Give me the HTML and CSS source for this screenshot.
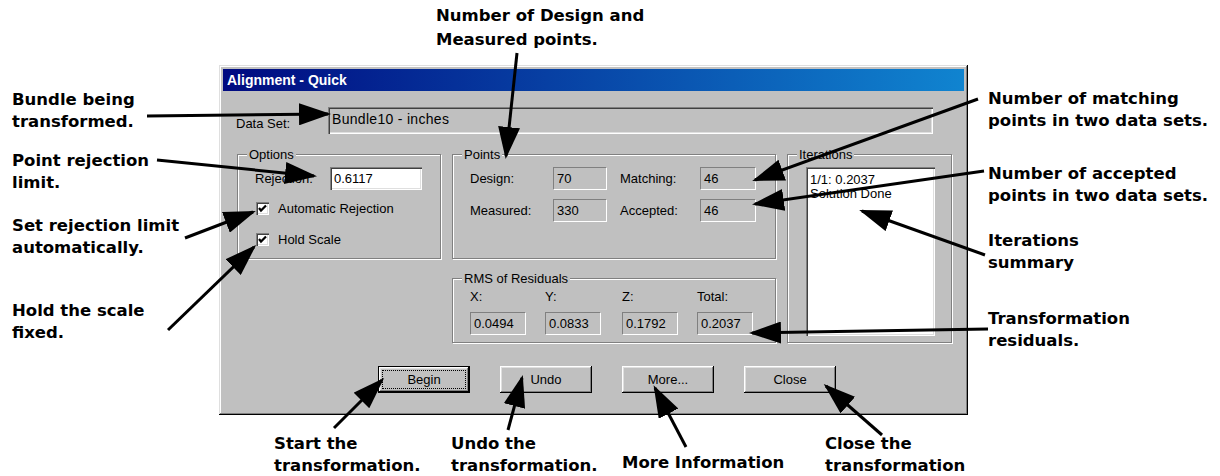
FILE: index.html
```html
<!DOCTYPE html>
<html>
<head>
<meta charset="utf-8">
<title>Alignment - Quick</title>
<link rel="stylesheet" href="styles.css">
</head>
<body>
<div class="canvas">
  <div class="dialog">
    <div class="titlebar">Alignment - Quick</div>
    <div class="dlg-body">
      <div class="dataset">
        <span class="ds-label">Data Set:</span>
        <div class="ds-field">Bundle10 - inches</div>
      </div>
      <div class="groups">
        <fieldset class="grp g-options">
          <legend>Options</legend>
          <div class="opt-row"><span class="opt-label">Rejection:</span><div class="edit">0.6117</div></div>
          <div class="check c1"><span class="cb"><svg width="13" height="13" viewBox="0 0 13 13"><path d="M3 6 L5 8.5 L10 3.5" fill="none" stroke="#000" stroke-width="2.2"/></svg></span>Automatic Rejection</div>
          <div class="check c2"><span class="cb"><svg width="13" height="13" viewBox="0 0 13 13"><path d="M3 6 L5 8.5 L10 3.5" fill="none" stroke="#000" stroke-width="2.2"/></svg></span>Hold Scale</div>
        </fieldset>
        <fieldset class="grp g-points">
          <legend>Points</legend>
          <div class="pts-grid">
            <span class="lbl">Design:</span><div class="static s-design">70</div><span></span><span class="lbl">Matching:</span><div class="static s-match">46</div>
            <span class="lbl">Measured:</span><div class="static s-design">330</div><span></span><span class="lbl">Accepted:</span><div class="static s-match">46</div>
          </div>
        </fieldset>
        <fieldset class="grp g-iter">
          <legend>Iterations</legend>
          <div class="listbox">
            <div>1/1: 0.2037</div>
            <div>Solution Done</div>
          </div>
        </fieldset>
        <fieldset class="grp g-rms">
          <legend>RMS of Residuals</legend>
          <div class="rms-grid">
            <span class="lbl">X:</span><span class="lbl">Y:</span><span class="lbl">Z:</span><span class="lbl">Total:</span>
            <div class="static s-rms">0.0494</div><div class="static s-rms">0.0833</div><div class="static s-rms">0.1792</div><div class="static s-rms">0.2037</div>
          </div>
        </fieldset>
      </div>
      <div class="buttons">
        <div class="btn btn-default"><span class="focus">Begin</span></div>
        <div class="btn"><span class="plain">Undo</span></div>
        <div class="btn"><span class="plain">More...</span></div>
        <div class="btn"><span class="plain">Close</span></div>
      </div>
    </div>
  </div>

  <div class="note n-design">Number of Design and<br>Measured points.</div>
  <div class="note n-bundle">Bundle being<br>transformed.</div>
  <div class="note n-reject">Point rejection<br>limit.</div>
  <div class="note n-auto">Set rejection limit<br>automatically.</div>
  <div class="note n-hold">Hold the scale<br>fixed.</div>
  <div class="note n-match">Number of matching<br>points in two data sets.</div>
  <div class="note n-accept">Number of accepted<br>points in two data sets.</div>
  <div class="note n-iter">Iterations<br>summary</div>
  <div class="note n-resid">Transformation<br>residuals.</div>
  <div class="note n-start">Start the<br>transformation.</div>
  <div class="note n-undo">Undo the<br>transformation.</div>
  <div class="note n-more">More Information</div>
  <div class="note n-close">Close the<br>transformation</div>

  <svg class="arrows" width="1220" height="476" viewBox="0 0 1220 476">
    <defs>
      <marker id="ah" markerUnits="userSpaceOnUse" markerWidth="32" markerHeight="22" refX="29" refY="11" orient="auto">
        <path d="M0,0 L32,11 L0,22 Z" fill="#000"/>
      </marker>
    </defs>
    <g stroke="#000" stroke-width="3" marker-end="url(#ah)">
      <line x1="517" y1="53" x2="506" y2="156"/>
      <line x1="147" y1="116" x2="328" y2="114"/>
      <line x1="157" y1="160" x2="314" y2="176"/>
      <line x1="185" y1="238" x2="253" y2="212"/>
      <line x1="168" y1="330" x2="254" y2="247"/>
      <line x1="978" y1="99" x2="755" y2="180"/>
      <line x1="984" y1="171" x2="755" y2="204"/>
      <line x1="985" y1="255" x2="862" y2="211"/>
      <line x1="988" y1="329" x2="752" y2="333"/>
      <line x1="334" y1="428" x2="382" y2="380"/>
      <line x1="508" y1="430" x2="522" y2="378"/>
      <line x1="686" y1="447" x2="655" y2="388"/>
      <line x1="882" y1="435" x2="826" y2="386"/>
    </g>
  </svg>
</div>
</body>
</html>
```
FILE: styles.css
```css
html, body {
  margin: 0;
  padding: 0;
  background: #fff;
}

.canvas {
  position: relative;
  width: 1220px;
  height: 476px;
  overflow: hidden;
  background: #fff;
}

/* ---------- dialog ---------- */
.dialog {
  position: absolute;
  left: 219px;
  top: 65px;
  width: 749px;
  height: 350px;
  box-sizing: border-box;
  padding: 4px;
  background: #c0c0c0;
  box-shadow: inset -1px -1px #000, inset 1px 1px #dfdfdf, inset -2px -2px #808080, inset 2px 2px #fff;
  display: flex;
  flex-direction: column;
  font: 13px/15px "Liberation Sans", Arial, sans-serif;
  color: #000;
}

.titlebar {
  height: 22px;
  line-height: 22px;
  padding-left: 4px;
  background: linear-gradient(90deg, #000a80 0%, #1084d0 100%);
  color: #fff;
  font-weight: bold;
  font-size: 14px;
}

.dlg-body {
  flex: 1;
  padding-top: 16px;
  display: flex;
  flex-direction: column;
}

.dataset {
  display: flex;
  align-items: center;
  height: 27px;
  padding-left: 13px;
}

.ds-label {
  width: 92px;
  padding-top: 5px;
}

.ds-field {
  width: 605px;
  height: 27px;
  box-sizing: border-box;
  padding: 3px 4px 0 4px;
  line-height: 19px;
  font-size: 14px;
  letter-spacing: 0.3px;
  box-shadow: inset 1px 1px #808080, inset 2px 2px #404040, inset -1px -1px #fff, inset -2px -2px #dfdfdf;
}

/* ---------- group boxes ---------- */
.groups {
  display: grid;
  grid-template-columns: 204px 324px 164px;
  grid-template-rows: 112px 72px;
  column-gap: 11px;
  row-gap: 12px;
  margin: 13px 0 0 14px;
  width: 713px;
}

.grp {
  margin: 0;
  padding: 0;
  min-width: 0;
  border: 1px solid #808080;
  box-shadow: 1px 1px 0 #fff, inset 1px 1px 0 #fff;
  box-sizing: border-box;
}

.grp legend {
  margin-left: 9px;
  padding: 0 2px;
  line-height: 15px;
  background: #c0c0c0;
}

.g-options { grid-column: 1; grid-row: 1; }
.g-points  { grid-column: 2; grid-row: 1; }
.g-iter    { grid-column: 3; grid-row: 1 / 3; margin-right: -1px; }
.g-rms     { grid-column: 2; grid-row: 2; }

/* options */
.opt-row {
  display: flex;
  align-items: center;
  margin: 5px 0 0 17px;
  height: 23px;
}

.opt-label {
  width: 75px;
}

.edit {
  width: 92px;
  height: 23px;
  box-sizing: border-box;
  padding: 0 4px;
  line-height: 23px;
  background: #fff;
  box-shadow: inset 1px 1px #808080, inset 2px 2px #404040, inset -1px -1px #fff, inset -2px -2px #dfdfdf;
}

.check {
  display: flex;
  align-items: center;
  height: 17px;
  margin-left: 18px;
}

.c1 { margin-top: 10px; }
.c2 { margin-top: 14px; }

.cb {
  width: 13px;
  height: 13px;
  margin-right: 9px;
  background: #fff;
  box-shadow: inset 1px 1px #808080, inset 2px 2px #404040, inset -1px -1px #fff, inset -2px -2px #dfdfdf;
  display: flex;
}

/* points */
.pts-grid {
  display: grid;
  grid-template-columns: 83px 54px 13px 80px 56px;
  grid-auto-rows: 23px;
  row-gap: 9px;
  align-items: center;
  margin: 5px 0 0 17px;
}

.static {
  height: 23px;
  box-sizing: border-box;
  padding: 0 3px;
  line-height: 21px;
  border-top: 1px solid #808080;
  border-left: 1px solid #808080;
  border-bottom: 1px solid #fff;
  border-right: 1px solid #fff;
}

.s-design { width: 54px; }
.s-match  { width: 56px; }
.s-rms    { width: 56px; }

/* rms */
.rms-grid {
  display: grid;
  grid-template-columns: 75px 77px 75px 56px;
  grid-template-rows: 16px 23px;
  row-gap: 7px;
  margin: 3px 0 0 17px;
}

.rms-grid .lbl {
  line-height: 16px;
}

/* iterations */
.listbox {
  width: 129px;
  height: 169px;
  box-sizing: border-box;
  margin: 5px 0 0 18px;
  padding: 6px 4px;
  line-height: 14px;
  background: #fff;
  box-shadow: inset 1px 1px #808080, inset 2px 2px #404040, inset -1px -1px #fff, inset -2px -2px #dfdfdf;
}

/* buttons */
.buttons {
  display: flex;
  gap: 30px;
  margin-top: 23px;
  padding-left: 155px;
}

.btn {
  width: 92px;
  height: 27px;
  box-sizing: border-box;
  background: #c0c0c0;
  box-shadow: inset -1px -1px #000, inset 1px 1px #fff, inset -2px -2px #808080, inset 2px 2px #dfdfdf;
  display: flex;
  padding: 4px;
}

.btn-default {
  box-shadow: inset 0 0 0 1px #000, inset -2px -2px #000, inset 2px 2px #fff, inset -3px -3px #808080, inset 3px 3px #dfdfdf;
}

.btn .plain,
.btn .focus {
  flex: 1;
  display: flex;
  align-items: center;
  justify-content: center;
}

.btn .focus {
  border: 1px dotted #000;
}

/* ---------- annotations ---------- */
.note {
  position: absolute;
  font-family: "DejaVu Sans", sans-serif;
  font-weight: bold;
  font-size: 16.5px;
  line-height: 22px;
  white-space: nowrap;
  color: #000;
}

.n-design { left: 436px; top: 4px; line-height: 24px; }
.n-bundle { left: 12px; top: 89px; }
.n-reject { left: 12px; top: 150px; }
.n-auto   { left: 12px; top: 215px; }
.n-hold   { left: 12px; top: 300px; }
.n-match  { left: 988px; top: 88px; }
.n-accept { left: 988px; top: 163px; }
.n-iter   { left: 988px; top: 230px; }
.n-resid  { left: 988px; top: 308px; }
.n-start  { left: 274px; top: 433px; }
.n-undo   { left: 451px; top: 433px; }
.n-more   { left: 622px; top: 452px; }
.n-close  { left: 825px; top: 433px; }

.arrows {
  position: absolute;
  left: 0;
  top: 0;
  pointer-events: none;
}
```
